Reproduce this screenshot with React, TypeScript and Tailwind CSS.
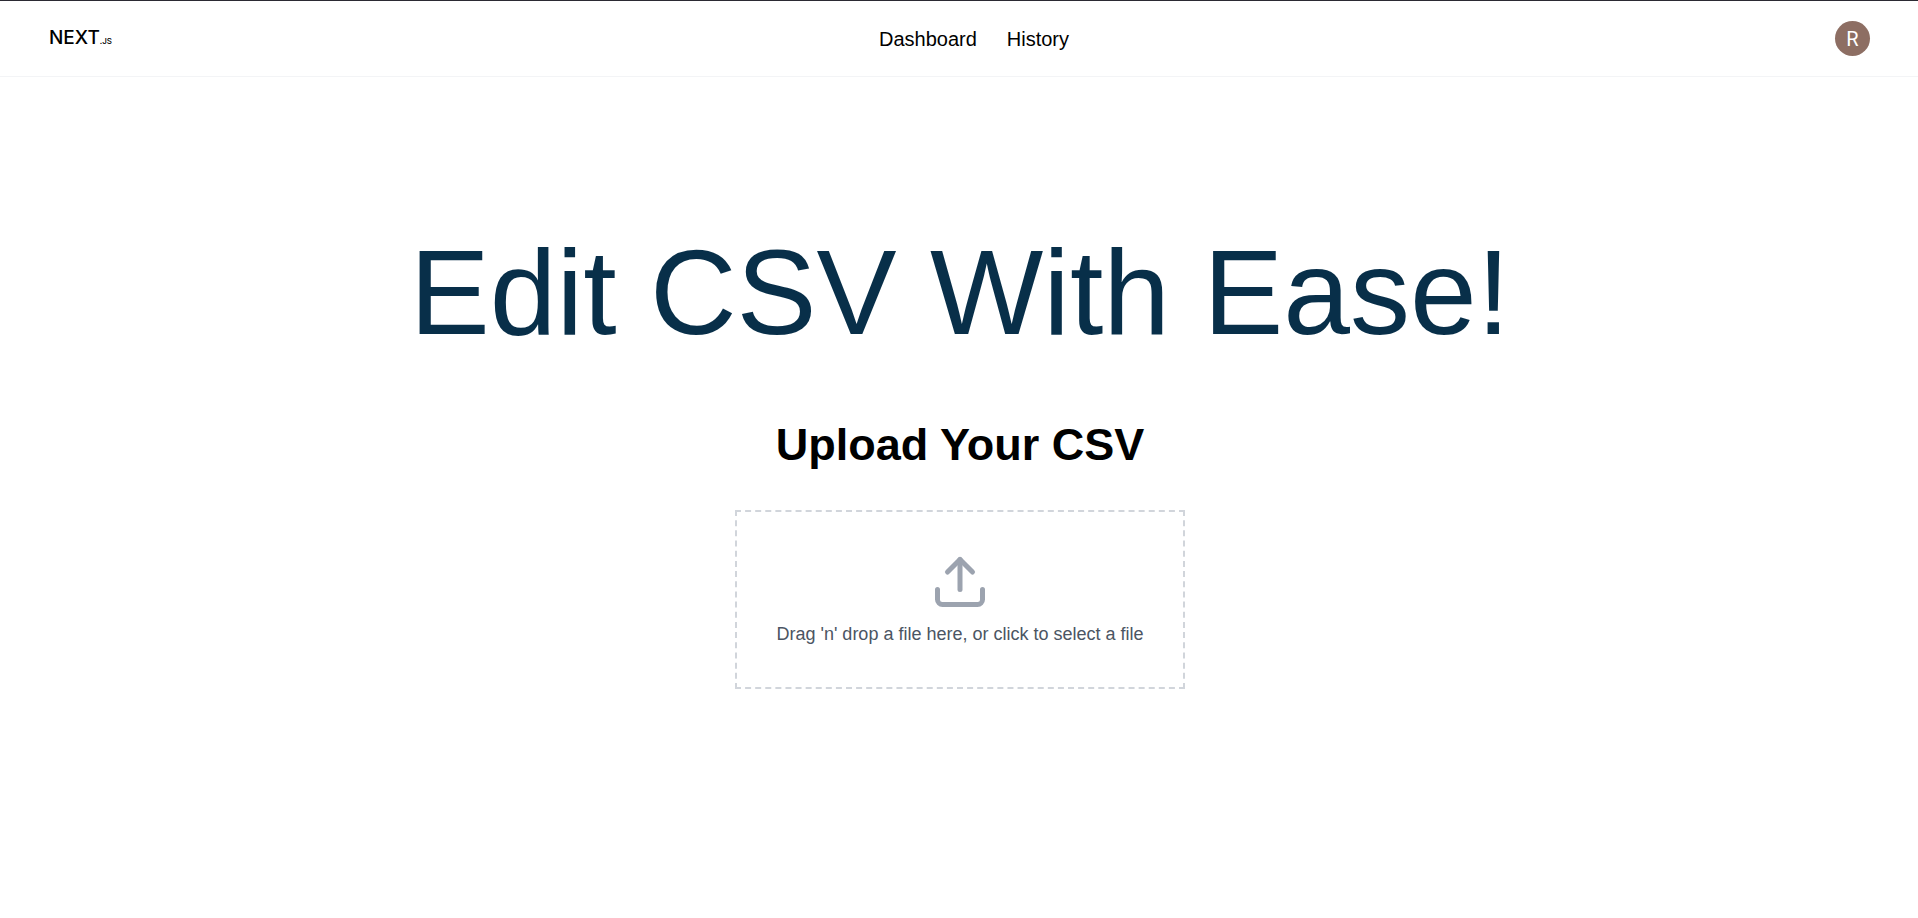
import { useRef } from "react";

function Logo() {
  return (
    <a href="#" aria-label="NEXT.JS" className="flex items-baseline font-['Inter',sans-serif] leading-6 text-black">
      <span className="text-[19px] leading-6 font-medium">NEXT</span>
      <span className="text-[8px] leading-6 font-medium">.JS</span>
    </a>
  );
}

function Header() {
  return (
    <header className="grid h-[77px] grid-cols-[1fr_auto_1fr] items-center border-t border-b border-t-[#2b2a33] border-b-gray-100 px-12">
      <div className="flex pt-px pl-px">
        <Logo />
      </div>
      <nav className="flex gap-[30px] pl-[30px] text-xl leading-7 text-black">
        <a href="#dashboard">Dashboard</a>
        <a href="#history">History</a>
      </nav>
      <div className="flex justify-end">
        <button
          type="button"
          aria-label="Account"
          className="flex size-[35px] items-center justify-center rounded-full bg-[#8d6e63] font-['Roboto',sans-serif] text-xl text-white"
        >
          R
        </button>
      </div>
    </header>
  );
}

function UploadIcon() {
  return (
    <svg
      viewBox="0 0 24 24"
      className="size-[60px]"
      fill="none"
      stroke="#9ca3af"
      strokeWidth="2"
      strokeLinecap="round"
      strokeLinejoin="round"
      aria-hidden="true"
    >
      <path d="M21 15v4a2 2 0 0 1-2 2H5a2 2 0 0 1-2-2v-4" />
      <path d="M17 8l-5-5-5 5" />
      <path d="M12 3v12" />
    </svg>
  );
}

function Dropzone() {
  const input = useRef<HTMLInputElement>(null);
  return (
    <div>
      <input ref={input} id="csv-file" type="file" accept=".csv" aria-label="CSV file" className="hidden" />
      <button
        type="button"
        onClick={() => input.current?.click()}
        className="flex cursor-pointer flex-col items-center border-2 border-dashed border-[#d1d5db] px-[39px] py-10"
      >
        <UploadIcon />
        <span className="mt-[10px] text-lg leading-[25px] text-[#4b5563]">
          Drag 'n' drop a file here, or click to select a file
        </span>
      </button>
    </div>
  );
}

export default function App() {
  return (
    <div className="min-h-screen bg-white font-['Liberation_Sans',Arial,sans-serif]">
      <Header />
      <main className="flex flex-col items-center pt-[155px] pr-6 pl-[26px]">
        <h1 className="text-center text-[120px] leading-[120px] text-[#082f49]">Edit CSV With Ease!</h1>
        <h2 className="mt-[66px] text-center text-[45px] leading-[54px] font-bold text-black">Upload Your CSV</h2>
        <div className="mt-[38px]">
          <Dropzone />
        </div>
      </main>
    </div>
  );
}
